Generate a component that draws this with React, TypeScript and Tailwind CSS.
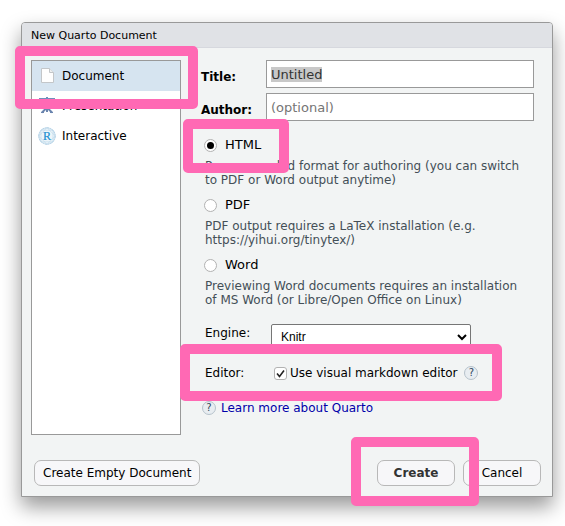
import { useEffect, useRef, useState, type ReactNode } from 'react';

function Highlight({ className }: { className: string }) {
  return (
    <span
      aria-hidden="true"
      className={`pointer-events-none absolute z-10 rounded-[5px] border-[10px] border-[#ff69b4] ${className}`}
    />
  );
}

function DocumentIcon() {
  return (
    <svg width="18" height="18" viewBox="0 0 18 18" aria-hidden="true">
      <path d="M3.500 1.500h8l4 4v10h-12z" fill="#fefefe" stroke="#c3c6c9" />
      <path d="M11.500 1.500v4h4" fill="#eef0f1" stroke="#c3c6c9" />
    </svg>
  );
}

function PresentationIcon() {
  return (
    <svg width="18" height="18" viewBox="0 0 18 18" aria-hidden="true">
      <path d="M1 1h16v2H1z" fill="#6f8fbd" />
      <path d="M9 0v2" stroke="#6f8fbd" strokeWidth="2" />
      <path d="M2.500 3h13v7.500h-13z" fill="#e9f0f7" stroke="#7f9cc0" />
      <path d="M9 10v5M8.500 11l-4.500 4.500M9.500 11l4.500 4.500" fill="none" stroke="#6a84ae" strokeWidth="2" />
      <path d="M3 15.500h3M12 15.500h3" stroke="#6a84ae" />
    </svg>
  );
}

function InteractiveIcon() {
  return (
    <svg width="18" height="18" viewBox="0 0 18 18" aria-hidden="true">
      <circle cx="9" cy="9" r="8.300" fill="#edf5fa" stroke="#a9cbe3" strokeWidth=".9" strokeDasharray="2 .6" />
      <path
        d="M9 .7 3 3.200.8 9 3 14.800l6 2.500 6-2.500L17.200 9 15 3.200zM3 3.200h12v11.600H3zM9 .7.8 9 9 17.300 17.200 9z"
        fill="none"
        stroke="#bcd6e9"
        strokeWidth=".6"
      />
      <text x="9" y="12.500" textAnchor="middle" fontSize="12" fontFamily="'Liberation Serif', serif" fill="#1a8fd0" stroke="#1a8fd0" strokeWidth=".2">
        R
      </text>
    </svg>
  );
}

function HelpIcon() {
  return (
    <span className="flex size-[14px] shrink-0 items-center justify-center rounded-full border border-[#b6c2cb] bg-[#e8edf1] text-[10px] leading-none text-[#30465a]">
      ?
    </span>
  );
}

const kinds = [
  { name: 'Document', icon: <DocumentIcon /> },
  { name: 'Presentation', icon: <PresentationIcon /> },
  { name: 'Interactive', icon: <InteractiveIcon /> },
];

const formats = [
  { name: 'HTML', note: 'Recommended format for authoring (you can switch to PDF or Word output anytime)' },
  { name: 'PDF', note: 'PDF output requires a LaTeX installation (e.g. https://yihui.org/tinytex/)' },
  { name: 'Word', note: 'Previewing Word documents requires an installation of MS Word (or Libre/Open Office on Linux)' },
];

const fieldClass =
  'h-7 min-w-0 flex-1 border border-[#999999] bg-white px-1 text-[13px] text-[#333333] outline-none placeholder:text-[#757575] selection:bg-[#c8c8c8] selection:text-[#333333]';

function Field({ id, label, children }: { id: string; label: string; children: ReactNode }) {
  return (
    <div className="flex items-center">
      <label htmlFor={id} className="w-[65px] shrink-0 pt-[6px] font-bold">
        {label}
      </label>
      {children}
    </div>
  );
}

function DialogButton({ className, children }: { className: string; children: ReactNode }) {
  return (
    <button type="button" className={`h-[26px] rounded-[7px] border border-[#b8b8b8] bg-[#f7f7f9] px-2 ${className}`}>
      {children}
    </button>
  );
}

export default function App() {
  const titleRef = useRef<HTMLInputElement>(null);
  const [kind, setKind] = useState('Document');
  const [format, setFormat] = useState('HTML');
  const [visual, setVisual] = useState(true);

  useEffect(() => {
    titleRef.current?.focus();
    titleRef.current?.select();
  }, []);

  return (
    <main className="bg-white pt-[22px] pr-3 pb-[29px] pl-[21px] font-['DejaVu_Sans',sans-serif] text-[12px] leading-[14px] text-black">
      <section
        role="dialog"
        aria-labelledby="dialog-title"
        className="rounded-t-[4px] border border-[#999999] bg-[#f2f4f4] shadow-[0_10px_20px_rgba(0,0,0,0.4)]"
      >
        <h1 id="dialog-title" className="rounded-t-[3px] border-b border-[#d6d8de] bg-[#e0e2e6] px-[9px] pt-[6px] pb-1 text-[11px]">
          New Quarto Document
        </h1>

        <div className="flex gap-5 pt-3 pr-[18px] pl-[9px]">
          <div className="h-[375px] w-[150px] shrink-0 border border-[#999999] bg-white">
            {kinds.map((item) => (
              <button
                key={item.name}
                type="button"
                onClick={() => setKind(item.name)}
                className={`relative flex h-[30px] w-full items-center gap-[6px] pl-[6px] text-left ${kind === item.name ? 'bg-[#d6e4f0]' : 'bg-white'}`}
              >
                {item.icon}
                {item.name}
                {item.name === 'Document' && <Highlight className="-top-[15px] -right-[18px] -bottom-[18px] -left-[17px]" />}
              </button>
            ))}
          </div>

          <form className="min-w-0 flex-1">
            <div className="flex flex-col gap-[5px]">
              <Field id="title" label="Title:">
                <input id="title" ref={titleRef} defaultValue="Untitled" className={fieldClass} />
              </Field>
              <Field id="author" label="Author:">
                <input id="author" placeholder="(optional)" className={fieldClass} />
              </Field>
            </div>

            <div role="radiogroup" aria-label="Output format" className="mt-4 flex flex-col gap-[10px] pr-2 pl-1">
              {formats.map((item) => (
                <div key={item.name}>
                  <div className="relative -ml-px w-fit">
                    <label className="flex h-4 items-center gap-2 text-[13px]">
                      <input
                        type="radio"
                        name="format"
                        checked={format === item.name}
                        onChange={() => setFormat(item.name)}
                        className="flex size-[13px] appearance-none items-center justify-center rounded-full border border-[#b2b2b2] bg-white before:size-[7px] before:rounded-full checked:before:bg-black"
                      />
                      {item.name}
                    </label>
                    {item.name === 'HTML' && <Highlight className="-top-[18px] -right-[28px] -bottom-[20px] -left-[21px]" />}
                  </div>
                  <p className="mt-[6px] text-[#444f57]">{item.note}</p>
                </div>
              ))}
            </div>

            <div className="mt-[17px] flex items-start pl-1">
              <label htmlFor="engine" className="w-[66px] shrink-0 pt-[2px]">
                Engine:
              </label>
              <select id="engine" className="h-[26px] w-[200px] rounded-[2px] border border-[#767676] bg-white px-[5px] font-['Liberation_Sans',sans-serif] text-[12px]">
                <option>Knitr</option>
                <option>Jupyter</option>
              </select>
            </div>

            <div className="relative mt-4 flex w-fit items-center pl-1">
              <span className="w-[69px] shrink-0">Editor:</span>
              <label className="mr-[7px] flex items-center gap-[3px]">
                <span className="grid size-[13px] shrink-0">
                  <input
                    type="checkbox"
                    checked={visual}
                    onChange={(event) => setVisual(event.target.checked)}
                    className="peer col-start-1 row-start-1 size-[13px] appearance-none rounded-[3px] border border-[#b2b2b2] bg-white"
                  />
                  <svg
                    viewBox="0 0 13 13"
                    aria-hidden="true"
                    className="pointer-events-none invisible col-start-1 row-start-1 size-[13px] peer-checked:visible"
                  >
                    <path d="M3 6.500 5.500 9.500 10 3.500" fill="none" stroke="#222" strokeWidth="1.600" />
                  </svg>
                </span>
                Use visual markdown editor
              </label>
              <HelpIcon />
              <Highlight className="-top-[22px] -right-[24px] -bottom-[21px] -left-[21px]" />
            </div>

            <a href="#quarto" className="mt-[21px] flex w-fit items-center gap-[5px] pl-px text-[#0000aa]">
              <HelpIcon />
              <span>Learn more about Quarto</span>
            </a>
          </form>
        </div>

        <footer className="flex items-center justify-between pt-[25px] pr-[11px] pb-[10px] pl-3">
          <DialogButton className="">Create Empty Document</DialogButton>
          <div className="flex gap-2">
            <div className="relative">
              <DialogButton className="w-[78px] font-bold text-[#333333]">Create</DialogButton>
              <Highlight className="-top-[23px] -right-[24px] -bottom-[20px] -left-[26px]" />
            </div>
            <DialogButton className="w-[78px]">Cancel</DialogButton>
          </div>
        </footer>
      </section>
    </main>
  );
}
